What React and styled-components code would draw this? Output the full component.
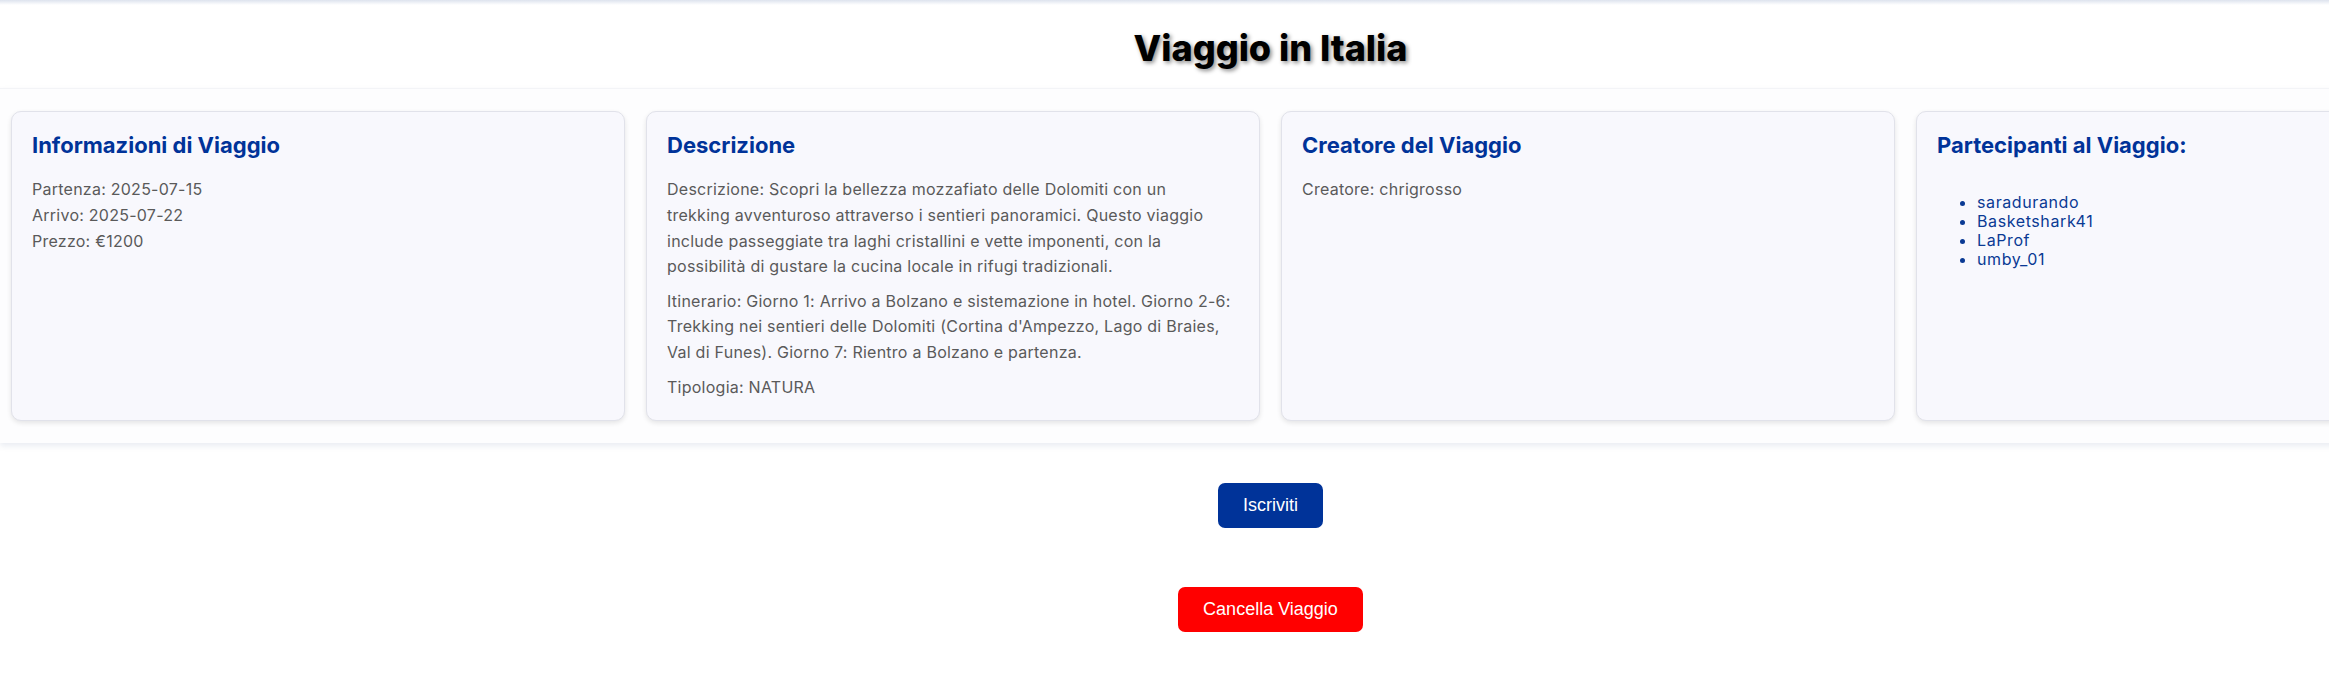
import React from 'react';
import styled, { createGlobalStyle } from 'styled-components';

const trip = {
  title: 'Viaggio in Italia',
  partenza: '2025-07-15',
  arrivo: '2025-07-22',
  prezzo: 1200,
  descrizione:
    'Scopri la bellezza mozzafiato delle Dolomiti con un\ntrekking avventuroso attraverso i sentieri panoramici. Questo viaggio\ninclude passeggiate tra laghi cristallini e vette imponenti, con la\npossibilità di gustare la cucina locale in rifugi tradizionali.',
  itinerario:
    "Giorno 1: Arrivo a Bolzano e sistemazione in hotel. Giorno 2-6:\nTrekking nei sentieri delle Dolomiti (Cortina d'Ampezzo, Lago di Braies,\nVal di Funes). Giorno 7: Rientro a Bolzano e partenza.",
  tipologia: 'NATURA',
  creatore: 'chrigrosso',
  partecipanti: ['saradurando', 'Basketshark41', 'LaProf', 'umby_01'],
};

const GlobalStyle = createGlobalStyle`
  body {
    margin: 0;
    background: #fff;
    font-family: Inter, "Noto Sans", sans-serif;
  }
`;

const Page = styled.div`
  width: max-content;
  min-width: 100%;
  display: flex;
  flex-direction: column;
`;

const TopShade = styled.div`
  height: 5px;
  background: linear-gradient(#dde3ee, #ffffff);
`;

const Header = styled.header`
  background: #fff;
  padding: 21px 0 18px;
  text-align: center;
`;

const Title = styled.h1`
  margin: 0;
  font-size: 36px;
  line-height: 44px;
  font-weight: 800;
  color: #000;
  text-shadow: 2px 2px 4px rgba(0, 0, 0, 0.45);
`;

const CardRow = styled.section`
  display: flex;
  gap: 21px;
  padding: 22px 11px;
  background: #fdfdfe;
  border-top: 1px solid #f3f4f7;
  box-shadow: 0 3px 6px rgba(40, 70, 130, 0.1);
`;

const Card = styled.div`
  box-sizing: border-box;
  width: 614px;
  flex-shrink: 0;
  display: flex;
  flex-direction: column;
  padding: 20px;
  background: #f8f8fd;
  border: 1px solid #e1e2ea;
  border-radius: 10px;
  box-shadow: 0 2px 5px rgba(0, 0, 0, 0.1);
`;

const CardTitle = styled.h3`
  margin: 0 0 19px;
  font-size: 22px;
  line-height: 1.2;
  font-weight: 700;
  color: #003399;
`;

const Detail = styled.p`
  margin: 0 0 ${({ $gap }) => $gap || 0}px;
  font-size: 16px;
  line-height: 1.6;
  letter-spacing: 0.25px;
  white-space: pre-line;
  color: #5a5a5a;
`;

const People = styled.ul`
  margin: 16px 0 0;
  padding-left: 40px;
  font-size: 16px;
  line-height: 19px;
  letter-spacing: 0.6px;
  color: #0a3a94;
`;

const Actions = styled.div`
  display: flex;
  flex-direction: column;
  align-items: center;
  gap: 59px;
  padding: 40px 0 40px;
`;

const Button = styled.button`
  font-family: "Liberation Sans", Arial, sans-serif;
  font-size: 18px;
  color: #fff;
  border: none;
  border-radius: 7px;
  padding: 12px 25px;
  cursor: pointer;
  background: ${({ $danger }) => ($danger ? '#ff0000' : '#003399')};
`;

const App = () => {
  return (
    <>
      <GlobalStyle />
      <Page>
        <TopShade />
        <Header>
          <Title>{trip.title}</Title>
        </Header>

        <CardRow>
          <Card>
            <CardTitle>Informazioni di Viaggio</CardTitle>
            <Detail>{`Partenza: ${trip.partenza}`}</Detail>
            <Detail>{`Arrivo: ${trip.arrivo}`}</Detail>
            <Detail>{`Prezzo: €${trip.prezzo}`}</Detail>
          </Card>

          <Card>
            <CardTitle>Descrizione</CardTitle>
            <Detail $gap={9}>{`Descrizione: ${trip.descrizione}`}</Detail>
            <Detail $gap={9}>{`Itinerario: ${trip.itinerario}`}</Detail>
            <Detail>{`Tipologia: ${trip.tipologia}`}</Detail>
          </Card>

          <Card>
            <CardTitle>Creatore del Viaggio</CardTitle>
            <Detail>{`Creatore: ${trip.creatore}`}</Detail>
          </Card>

          <Card>
            <CardTitle>Partecipanti al Viaggio:</CardTitle>
            <People>
              {trip.partecipanti.map((name) => (
                <li key={name}>{name}</li>
              ))}
            </People>
          </Card>
        </CardRow>

        <Actions>
          <Button>Iscriviti</Button>
          <Button $danger>Cancella Viaggio</Button>
        </Actions>
      </Page>
    </>
  );
};

export default App;
